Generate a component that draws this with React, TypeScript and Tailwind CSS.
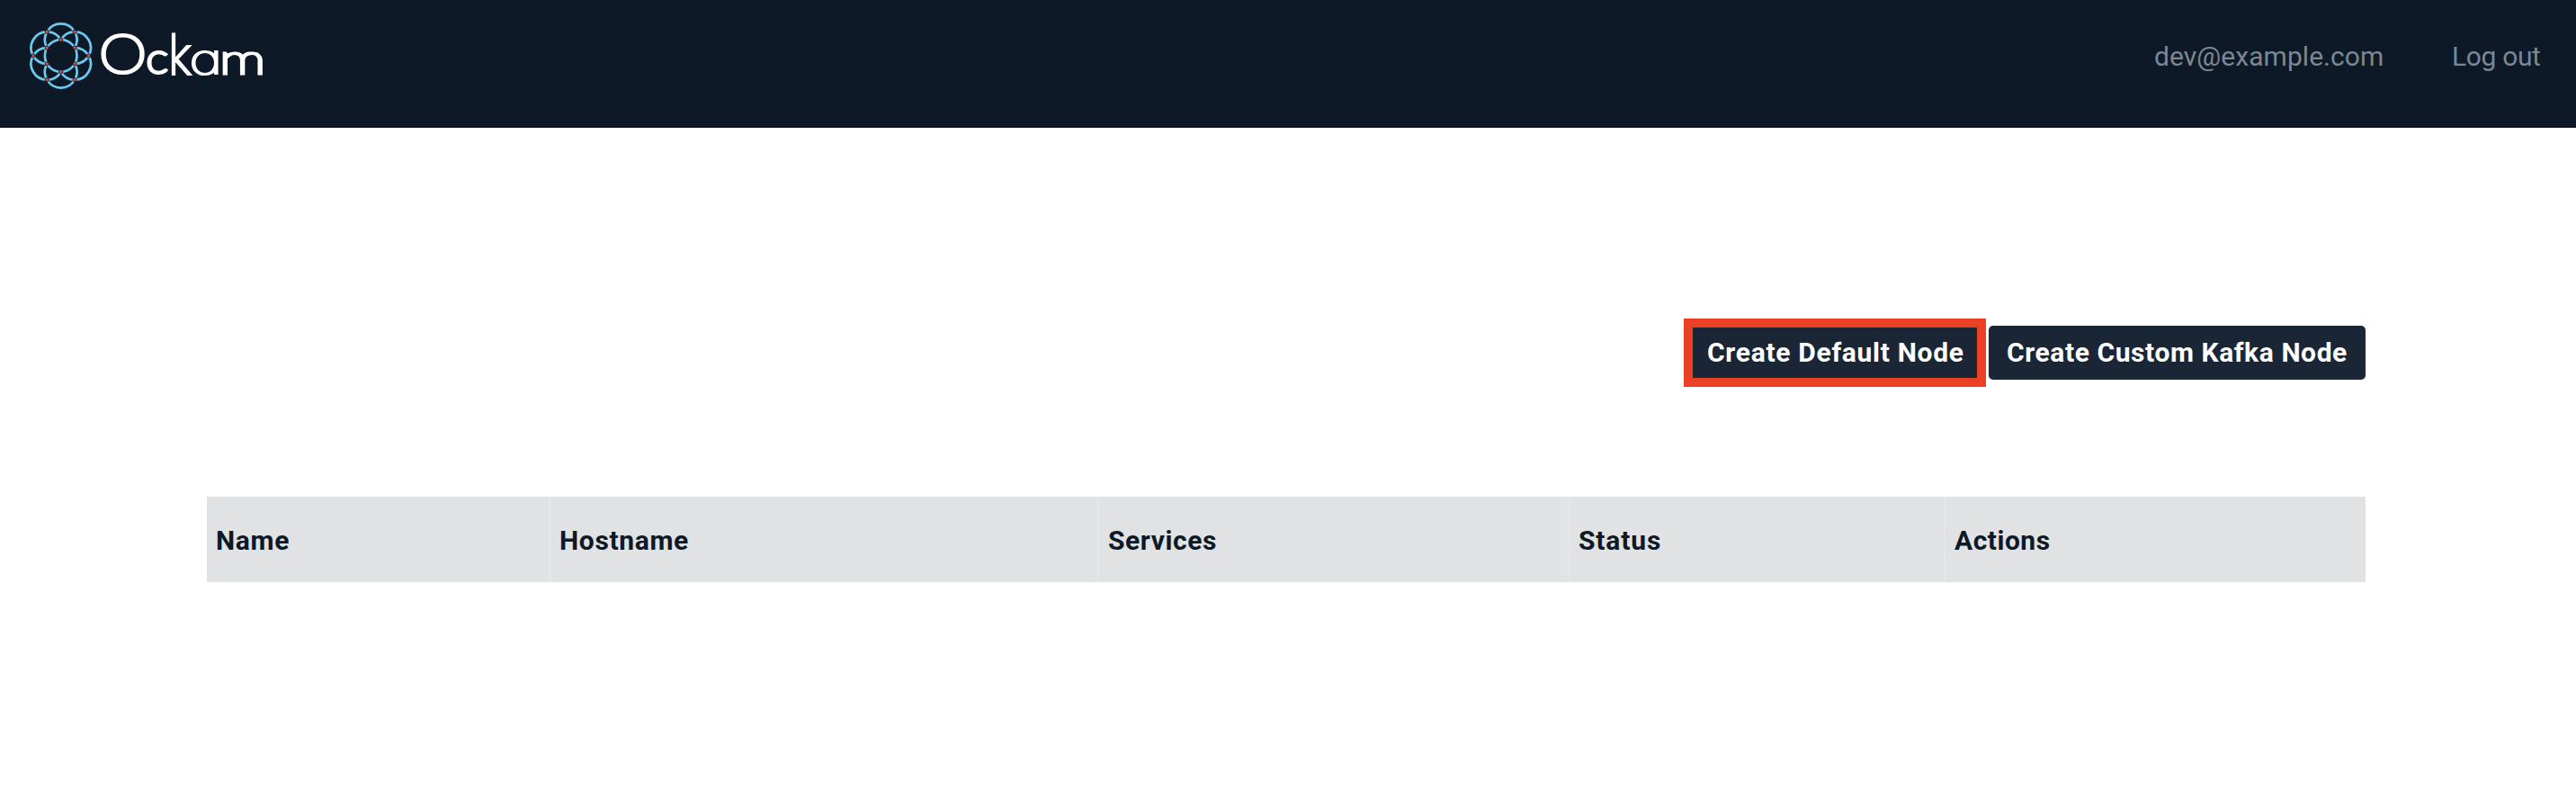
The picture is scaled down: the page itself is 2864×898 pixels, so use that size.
const CX = 67.7;
const CY = 62;
const R = 17.8;

const polar = (radius: number, deg: number): [number, number] => {
  const a = (deg * Math.PI) / 180;
  return [CX + radius * Math.cos(a), CY + radius * Math.sin(a)];
};

const petals = [30, 90, 150, 210, 270, 330];

function petalPath(deg: number) {
  const [x1, y1] = polar(R, deg - 60);
  const [x2, y2] = polar(R, deg + 60);
  return `M${x1} ${y1}A${R} ${R} 0 1 1 ${x2} ${y2}`;
}

function Logo() {
  const nodes = [
    ...petals.map((d) => polar(R, d)),
    ...petals.map((d) => polar(R * Math.sqrt(3), d + 30)),
  ];
  return (
    <svg width="310" height="120" viewBox="0 0 310 120" className="block" role="img" aria-label="Ockam">
      <g fill="none" stroke="#6cc8ef" strokeWidth="2.7">
        <circle cx={CX} cy={CY} r={R} />
        {petals.map((d) => (
          <path key={d} d={petalPath(d)} />
        ))}
      </g>
      {nodes.map(([x, y], i) => (
        <circle key={i} cx={x} cy={y} r="2.1" fill="#e8503a" stroke="#0e1928" strokeWidth="1" />
      ))}
      <g fill="#ffffff" stroke="#ffffff" className="font-[Lato,sans-serif] font-thin">
        <text fontSize="61" strokeWidth="4" transform="translate(109.9 81.3) scale(1.11 1)">O</text>
        <text fontSize="45.5" strokeWidth="3.8" transform="translate(162.6 81.3) scale(1.14 1)">c</text>
        <text fontSize="60" strokeWidth="4.2" transform="translate(188 81.7) scale(0.85 1)">k</text>
        <text
          fontSize="45"
          strokeWidth="2.2"
          transform="translate(210.4 82.1) scale(1.4 1)"
          className="font-[Inter,sans-serif] [font-feature-settings:'cv11']"
        >
          a
        </text>
        <text fontSize="46" strokeWidth="3.2" transform="translate(244 82) scale(1.41 1)">m</text>
      </g>
    </svg>
  );
}

const columns = [
  { label: 'Name', className: 'w-[380px] pl-[10px] tracking-[0.7px]' },
  { label: 'Hostname', className: 'w-[610px] border-l-2 pl-[10px] tracking-[0.65px]' },
  { label: 'Services', className: 'w-[523px] border-l-2 pl-[10px] tracking-[0.6px]' },
  { label: 'Status', className: 'w-[418px] border-l-2 pl-[10px] tracking-[0.85px]' },
  { label: 'Actions', className: 'w-[469px] border-l-2 pl-[10px] tracking-[0.5px]' },
];

export default function App() {
  return (
    <div className="h-[898px] w-[2864px] overflow-hidden bg-white font-[Roboto,sans-serif] text-[30px] leading-9">
      <header className="flex h-[142px] items-start border-b-2 border-[#0b1324] bg-[#0e1928]">
        <Logo />
        <nav className="ml-auto flex pt-[45px] text-[#7b8792]">
          <span className="w-[331px] tracking-[0.05px]">dev@example.com</span>
          <a className="w-[138px] tracking-[-0.35px]">Log out</a>
        </nav>
      </header>

      <main className="pl-[230px] pr-[234px] pt-[212px]">
        <div className="flex items-center justify-end gap-[3px] font-bold text-white">
          <button className="h-[76px] w-[336px] whitespace-nowrap border-[10px] border-[#ea4026] bg-[#1a2635] pl-[16px] text-left tracking-[0.7px]">
            Create Default Node
          </button>
          <button className="h-[60px] w-[419px] whitespace-nowrap rounded-[5px] bg-[#1a2635] pl-[20px] text-left tracking-[0.58px]">
            Create Custom Kafka Node
          </button>
        </div>

        <table className="mt-[122px] block w-[2400px] bg-[#e0e2e4] text-left text-[#0e1928]">
          <thead className="block">
            <tr className="flex h-[95px]">
              {columns.map((c) => (
                <th key={c.label} className={`block border-[#e5e7eb] pt-[31px] font-bold ${c.className}`}>
                  {c.label}
                </th>
              ))}
            </tr>
          </thead>
        </table>
      </main>
    </div>
  );
}
